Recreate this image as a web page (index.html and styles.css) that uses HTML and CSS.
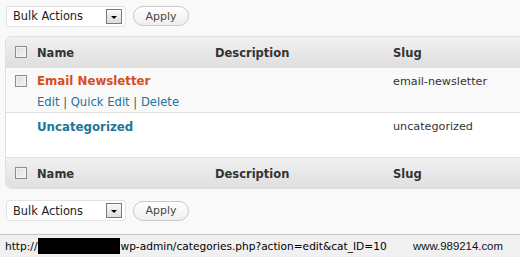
FILE: index.html
```html
<!DOCTYPE html>
<html>
<head>
<meta charset="utf-8">
<link rel="stylesheet" href="styles.css">
</head>
<body>
<div class="page">
  <div class="actions top">
    <div class="select"><span class="select-label">Bulk Actions</span><span class="drop"><svg width="8" height="5" viewBox="0 0 8 5"><path d="M1 1h6L4 4z" fill="#000"/></svg></span></div>
    <button class="apply">Apply</button>
  </div>
  <div class="table">
    <div class="row head">
      <div class="cb"><span class="box"></span></div>
      <div class="col name">Name</div>
      <div class="col desc">Description</div>
      <div class="col slug">Slug</div>
    </div>
    <div class="row item alt">
      <div class="cb"><span class="box"></span></div>
      <div class="col name">
        <a class="title red">Email Newsletter</a>
        <div class="row-actions"><a>Edit</a> <span class="sep">|</span> <a>Quick Edit</a> <span class="sep">|</span> <a>Delete</a></div>
      </div>
      <div class="col desc"></div>
      <div class="col slug text">email-newsletter</div>
    </div>
    <div class="row item">
      <div class="cb"></div>
      <div class="col name"><a class="title blue">Uncategorized</a></div>
      <div class="col desc"></div>
      <div class="col slug text">uncategorized</div>
    </div>
    <div class="row head foot">
      <div class="cb"><span class="box"></span></div>
      <div class="col name">Name</div>
      <div class="col desc">Description</div>
      <div class="col slug">Slug</div>
    </div>
  </div>
  <div class="actions bottom">
    <div class="select"><span class="select-label">Bulk Actions</span><span class="drop"><svg width="8" height="5" viewBox="0 0 8 5"><path d="M1 1h6L4 4z" fill="#000"/></svg></span></div>
    <button class="apply">Apply</button>
  </div>
</div>
<div class="status">
  <span class="url">http://<span class="redact"></span>wp-admin/categories.php?action=edit&amp;cat_ID=10</span>
  <span class="mark">www.989214.com</span>
</div>
</body>
</html>
```
FILE: styles.css
```css
html, body {
  margin: 0;
  padding: 0;
  background: #f9f9f9;
  overflow: hidden;
  width: 520px;
  height: 257px;
}
body {
  font-family: "DejaVu Sans", Verdana, sans-serif;
  color: #333;
  display: flex;
  flex-direction: column;
}
.page {
  height: 234px;
  padding-left: 5px;
}
.actions {
  display: flex;
  align-items: center;
  gap: 7px;
  padding-left: 1px;
}
.actions.top {
  padding-top: 5px;
  height: 22px;
  margin-bottom: 9px;
}
.actions.bottom {
  margin-top: 11px;
  height: 21px;
}
.select {
  box-sizing: border-box;
  width: 120px;
  height: 21px;
  background: #fff;
  border: 1px solid #e3e3e3;
  border-radius: 3px;
  display: flex;
  align-items: center;
  justify-content: space-between;
  padding: 0 3px 0 6px;
  font-size: 11.4px;
  color: #222;
}
.drop {
  box-sizing: border-box;
  width: 16px;
  height: 15px;
  border: 1px solid #7a7a7a;
  background: linear-gradient(#fafafa, #dcdcdc);
  display: flex;
  align-items: center;
  justify-content: center;
}
.drop svg { display: block; margin-top: 2px; }
.apply {
  box-sizing: border-box;
  height: 20px;
  width: 56px;
  border: 1px solid #c8c8c8;
  border-radius: 11px;
  background: linear-gradient(#ffffff, #efefef);
  font-family: "DejaVu Sans", Verdana, sans-serif;
  font-size: 11px;
  color: #464646;
  padding: 0;
}
.table {
  width: 530px;
  border: 1px solid #dfdfdf;
  border-radius: 6px;
  overflow: hidden;
  background: #fff;
}
.row {
  display: grid;
  grid-template-columns: 31px 178px 178px 1fr;
}
.head {
  height: 30px;
  background: linear-gradient(#f1f1f1, #dfdfdf);
  align-items: center;
  font-size: 11.5px;
  font-weight: bold;
  color: #333;
}
.head .cb { align-self: center; }
.cb {
  padding-left: 9px;
}
.box {
  display: block;
  box-sizing: border-box;
  width: 12px;
  height: 12px;
  border: 1px solid #8e8e8e;
  background: linear-gradient(135deg, #dcdcdc, #f6f6f6);
  box-shadow: inset 0 0 0 1px #f2f2f2;
}
.head .col { padding-top: 1px; }
.item {
  border-top: 1px solid #dfdfdf;
  font-size: 11.2px;
}
.item.alt {
  height: 44px;
  background: #f9f9f9;
}
.item:not(.alt) {
  height: 44px;
  background: #fff;
}
.item .cb { padding-top: 7px; }
.item .col { padding-top: 5px; }
.title {
  font-size: 11.8px;
  font-weight: bold;
  line-height: 17px;
}
.red { color: #d54e21; }
.blue { color: #21759b; }
.item:not(.alt) .col.name { padding-top: 6px; }
.row-actions {
  margin-top: 5px;
  color: #21759b;
  font-size: 11.6px;
}
.sep { color: #555; }
.text { color: #333; padding-top: 7px !important; }
.head.foot {
  border-top: 1px solid #dfdfdf;
}
.status {
  box-sizing: border-box;
  height: 23px;
  border-top: 1px solid #c4c4c4;
  background: #f0f0f0;
  display: flex;
  align-items: center;
  padding-left: 5px;
  font-family: "DejaVu Sans", Tahoma, sans-serif;
  font-size: 10.6px;
  color: #000;
}
.url { display: flex; align-items: center; width: 408px; }
.redact {
  display: inline-block;
  width: 82px;
  height: 16px;
  background: #000;
  margin: 0 0 0 1px;
}
.mark {
  font-family: "Liberation Sans", Arial, sans-serif;
  font-size: 11.4px;
  color: #111;
}
```
